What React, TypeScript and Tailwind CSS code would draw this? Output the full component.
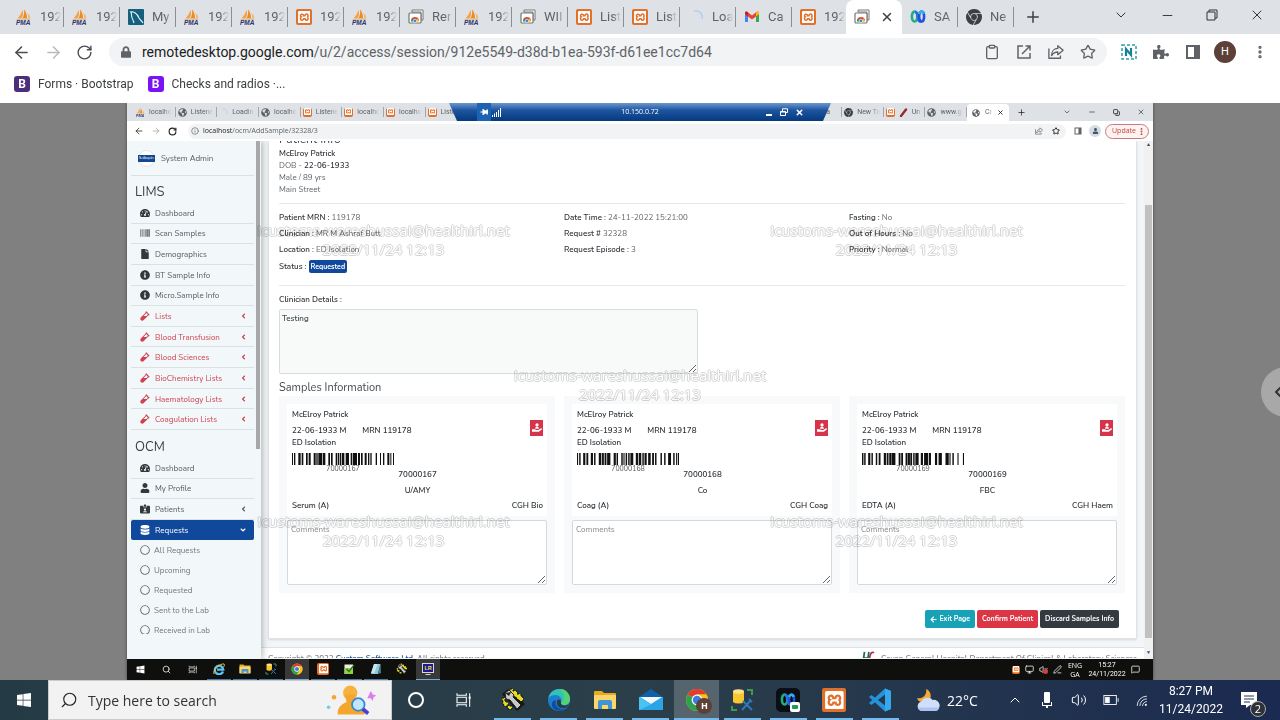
import React from "react";
import {
  FaTachometerAlt, FaBarcode, FaFile, FaInfoCircle, FaVial, FaAngleLeft, FaAngleDown, FaUser,
  FaIdCardAlt, FaDatabase, FaRegCircle, FaGlobeAmericas, FaArrowLeft, FaLock, FaWindows, FaPuzzlePiece, FaThumbtack,
} from "react-icons/fa";
import { SiXampp, SiGooglechrome } from "react-icons/si";
import {
  ArrowLeft, ArrowRight, RotateCw, X, Plus, ChevronDown, ChevronUp, ChevronLeft, Minus, Clipboard,
  Star, EllipsisVertical, Search, Volume2, Info, Copy, MessageSquare, Monitor, VolumeX, PenLine,
} from "lucide-react";

type IconProps = { className?: string };

const Pma = ({ className }: IconProps) => (
  <svg viewBox="0 0 32 32" className={className}>
    <path d="M13 2 C15 8 14 14 11 19 L3 19 C8 14 11 8 13 2Z" fill="#f4a13c" />
    <path d="M16 1 C21 6 22 14 22 19 L13 19 C16 13 17 7 16 1Z" fill="#f08a1c" />
    <path d="M23 8 C27 11 28 15 29 19 L24 19 C25 15 24 12 23 8Z" fill="#f7b35c" />
    <path d="M1 20 L30 19 L27 22 L2 22Z" fill="#d8c4a8" />
    <text x="0" y="32" fontSize="13" fontWeight="900" fontStyle="italic" fontFamily="Liberation Sans, sans-serif" fill="#2d3263">PMA</text>
  </svg>
);

const Xampp = ({ className }: IconProps) => (
  <span className={`flex items-center justify-center rounded-[2px] bg-[#e0702a] text-white ${className}`}>
    <SiXampp className="h-[78%] w-[78%]" />
  </span>
);

const MySql = ({ className }: IconProps) => (
  <svg viewBox="0 0 16 16" className={className}>
    <rect width="16" height="16" rx="1" fill="#15607f" />
    <path d="M2 3 C5 2 9 4 11 9 C12 11 14 12 15 14 M3 3 C4 6 3 8 5 11 L6 14" stroke="#e8f2f6" strokeWidth="1.1" fill="none" />
  </svg>
);

const Remote = ({ className }: IconProps) => (
  <svg viewBox="0 0 16 16" className={className}>
    <path d="M4 1 H15 V11 H13 V3 H4Z" fill="#fff" stroke="#777" strokeWidth="1" />
    <rect x="1" y="4" width="12" height="10" rx="1" fill="#fff" stroke="#777" strokeWidth="1.2" />
    <path d="M3 12 A4 4 0 0 1 11 12Z" fill="#e04a3a" />
    <path d="M3 12.6 A4 4 0 0 1 5 9 L7 13Z" fill="#35a353" />
    <path d="M11 12.6 A4 4 0 0 0 9.5 9.5 L7 13Z" fill="#f6bd22" />
    <circle cx="7" cy="12" r="1.7" fill="#3f7fe8" stroke="#fff" strokeWidth=".6" />
  </svg>
);

const Spinner = ({ className }: IconProps) => (
  <svg viewBox="0 0 16 16" className={className}>
    <path d="M6 2 A6.5 6.5 0 0 1 14 10" stroke="#b9cdf5" strokeWidth="1.6" fill="none" />
  </svg>
);

const Gmail = ({ className }: IconProps) => (
  <svg viewBox="0 0 16 16" className={className}>
    <path d="M1 4 V13 H4 V7Z" fill="#4285f4" />
    <path d="M15 4 V13 H12 V7Z" fill="#34a853" />
    <path d="M1 4 C1 2.5 2.6 2 3.6 3 L8 6.6 L12.4 3 C13.4 2 15 2.5 15 4 L12 7.4 L8 10.6 L4 7.4Z" fill="#ea4335" />
    <path d="M12 3.3 C13.6 2 15 2.6 15 4 V5 L12 7.4Z" fill="#fbbc04" />
    <path d="M1 4 C1 2.6 2.4 2 4 3.3 V7.4 L1 5Z" fill="#c5221f" />
  </svg>
);

const Webex = ({ className }: IconProps) => (
  <svg viewBox="0 0 16 16" className={className}>
    <ellipse cx="4.6" cy="7.5" rx="2.7" ry="5" fill="none" stroke="#1fae7c" strokeWidth="2.6" />
    <path d="M5 3 C7 3 8 6 8 8 C8 11 9.5 13 11 12" fill="none" stroke="#2a6df0" strokeWidth="3" />
    <ellipse cx="11.6" cy="7.5" rx="2.5" ry="5" fill="none" stroke="#2350e0" strokeWidth="2.6" />
    <path d="M9 5 C10 2 13 2 13.5 5" fill="none" stroke="#27b9dd" strokeWidth="2.4" />
  </svg>
);

const ChromeLogo = ({ className }: IconProps) => (
  <svg viewBox="0 0 24 24" className={className}>
    <circle cx="12" cy="12" r="11" fill="#fbc116" />
    <path d="M12 12 L2.5 6.5 A11 11 0 0 1 21.5 6.5 L12 6.5Z" fill="#e33b2e" />
    <path d="M12 12 L2.5 6.5 A11 11 0 0 0 12 23 L17 15Z" fill="#2da14c" />
    <path d="M12 6.5 H21.5 A11 11 0 0 1 12 23 L17 14Z" fill="#fbc116" />
    <circle cx="12" cy="12" r="5.4" fill="#fff" />
    <circle cx="12" cy="12" r="4.2" fill="#3b7de8" />
  </svg>
);

const Edge = ({ className }: IconProps) => (
  <svg viewBox="0 0 24 24" className={className}>
    <circle cx="12" cy="12" r="11" fill="#1b7fd0" />
    <path d="M1.5 10 C3 3 9 1 12 1 C19 1 23 6 23 11 C23 15 20 17 17 17 C14 17 13 15.5 14 14 C16 10 12 7 8.5 7 C5 7 2.5 8.5 1.5 10Z" fill="#35c1b5" />
    <path d="M13 1 C19 1 23 6 23 11 C23 15 20 17 17 17 C15 17 14 16 14 15 C19 12 18 5 13 1Z" fill="#5fd95a" opacity=".75" />
    <path d="M9 12 C7 17 11 22 18 21 C15 23.5 9 23.5 6 20 C3.5 16 5 12.5 9 12Z" fill="#0d4f9e" />
    <path d="M14 14 C13 17 18 19 22 16 C21 19 18.5 20.5 16 20.3 C11 20 9 16 10 13 C11 11 13.5 11 14 14Z" fill="#2a3a48" />
  </svg>
);

const Explorer = ({ className }: IconProps) => (
  <svg viewBox="0 0 24 24" className={className}>
    <path d="M1 4 Q1 3 2 3 H9 L11 5 H22 Q23 5 23 6 V20 H1Z" fill="#e8a820" />
    <rect x="1" y="7" width="22" height="14" rx="1" fill="#fcd66a" />
    <path d="M5 21 V14 Q5 12 7 12 H17 Q19 12 19 14 V21 H15 V17 H9 V21Z" fill="#3f96d6" />
  </svg>
);

const Mail = ({ className }: IconProps) => (
  <svg viewBox="0 0 24 24" className={className}>
    <path d="M0 9 L12 1 L24 9 V12 H0Z" fill="#0f5fa9" />
    <path d="M0 9 H24 V22 H0Z" fill="#2ba5e6" />
    <path d="M1 9 H23 L12 16Z" fill="#f3f7fb" />
    <path d="M0 9 L12 16.5 L0 22Z" fill="#49c3f2" />
  </svg>
);

const Tools = ({ className }: IconProps) => (
  <svg viewBox="0 0 24 24" className={className}>
    <path d="M1 6 L7 1 L24 16 L16 23Z" fill="#17170f" />
    <path d="M9 1 h3 v2 h4 v3 h4 v3 h2 v4 h-3 l-9 -8Z M1 10 h3 v4 h3 v4 h4 v3 h-4 v-3 h-4Z" fill="#e8dd1c" strokeDasharray="2" stroke="#111" />
    <path d="M4 5 L8 2 L13 7 L12 9 L20 17 L16 21 L9 12 L5 11Z" fill="#c9c9c9" stroke="#222" />
    <path d="M4 5 L8 8 L10 4" fill="#222" />
  </svg>
);

const DbTool = ({ className }: IconProps) => (
  <svg viewBox="0 0 24 24" className={className}>
    <path d="M3 3 V14 A6 2.5 0 0 0 14 14 V3Z" fill="#f8c62e" />
    <ellipse cx="8.5" cy="3.5" rx="5.5" ry="2.3" fill="#fde28a" />
    <path d="M17 2 H22 V7 M2 18 V22 H7" stroke="#3d9a4c" strokeWidth="2" fill="none" />
    <path d="M13 13 L22 22 M21 12 L12 22 M19 11 L22 14" stroke="#2a79b8" strokeWidth="2" />
  </svg>
);

const VsCode = ({ className }: IconProps) => (
  <svg viewBox="0 0 24 24" className={className}>
    <path d="M17 0.5 L23 3 V21 L17 23.5 L1 9 L3.5 7 L17 17.5 V6.5 L3.5 17 L1 15Z" fill="#2592dc" />
    <path d="M17 0.5 L23 3 V21 L17 23.5Z" fill="#35a8ee" />
  </svg>
);

const IeLogo = ({ className }: IconProps) => (
  <svg viewBox="0 0 24 24" className={className}>
    <path d="M20 17 A8.5 8.5 0 1 1 20.5 13 H8" fill="none" stroke="#5cc4f2" strokeWidth="4.5" />
    <path d="M2 22 C-2 16 14 0 22 2 C24 3 22 7 21 8" fill="none" stroke="#f5c431" strokeWidth="2" />
  </svg>
);

const TaskView = ({ className }: IconProps) => (
  <svg viewBox="0 0 24 24" className={className} fill="none" stroke="currentColor" strokeWidth="1.6">
    <path d="M3 2 V5 H17 V2 M3 22 V19 H17 V22 M3 8 H17 V16 H3Z M22 2 V22" />
    <rect x="20.5" y="7" width="3" height="3" fill="currentColor" stroke="none" />
  </svg>
);

const NotepadPlus = ({ className }: IconProps) => (
  <svg viewBox="0 0 24 24" className={className}>
    <path d="M3 3 H20 V22 H3Z" fill="#e9f2df" />
    <path d="M3 10 H20 V22 H3Z" fill="#8fcf4b" />
    <path d="M7 12 L12 17 L22 4" stroke="#356b1c" strokeWidth="2.5" fill="none" />
  </svg>
);

const Notepad = ({ className }: IconProps) => (
  <svg viewBox="0 0 24 24" className={className}>
    <path d="M8 2 H21 L16 22 H2Z" fill="#8fc9d8" />
    <path d="M8 2 H15 L9 20 H2Z" fill="#c8e6ee" />
    <path d="M16 22 L21 2 L22 20Z" fill="#4d7f8d" />
  </svg>
);

const LabRunner = ({ className }: IconProps) => (
  <svg viewBox="0 0 24 24" className={className}>
    <rect x="1" y="1" width="22" height="18" fill="#1b1b8f" stroke="#d7d7d7" strokeWidth="2" />
    <text x="5" y="14" fontSize="11" fontWeight="700" fontFamily="Liberation Sans, sans-serif" fill="#ffe23b">LR</text>
    <path d="M7 23 H17" stroke="#d7d7d7" strokeWidth="2" />
  </svg>
);

const Assistant = ({ className }: IconProps) => (
  <svg viewBox="0 0 60 36" className={className}>
    <circle cx="28" cy="10" r="8" fill="#f6b23c" />
    <path d="M14 34 C14 24 20 23 24 20 L22 12 H34 L33 20 C40 22 44 26 44 34Z" fill="#f4a52c" />
    <circle cx="37" cy="23" r="7" fill="#bfe6fb" stroke="#3d87cf" strokeWidth="2" />
    <path d="M42 28 L48 33" stroke="#4b3fd0" strokeWidth="4" />
    <circle cx="10" cy="15" r="2.5" fill="#f4a52c" />
    <circle cx="4" cy="26" r="2" fill="#6fd0df" />
    <path d="M51 8 L53 12 L57 13 L54 15 L53 19 L51 16 L47 16 L49 12Z" fill="#dd7cf0" />
  </svg>
);

const Weather = ({ className }: IconProps) => (
  <svg viewBox="0 0 28 26" className={className}>
    <path d="M12 1 C13 7 9 12 2 11 C5 18 16 17 17 9 C17 5 15 2 12 1Z" fill="#f6a93b" />
    <path d="M7 25 A6 5.5 0 0 1 7 14.5 A7 6.5 0 0 1 19 13 A6 6 0 0 1 22 25Z" fill="#cfdffa" />
    <path d="M3 21 A6 5 0 0 0 7 25 H22 A5 5 0 0 0 26 21Z" fill="#a9c3f2" />
  </svg>
);

const WifiIcon = ({ className }: IconProps) => (
  <svg viewBox="0 0 24 24" className={className} fill="none" stroke="currentColor" strokeWidth="1.5">
    <path d="M4 22 A18 18 0 0 1 22 4 M9 22 A13 13 0 0 1 22 9 M14 22 A8 8 0 0 1 22 14" />
    <circle cx="20" cy="20" r="2" fill="currentColor" stroke="none" />
  </svg>
);

const SideBySide = ({ className }: IconProps) => (
  <svg viewBox="0 0 16 16" className={className}>
    <path d="M1 1 H15 V15 H1Z M3 3 V13 H9 V3Z" fill="#5f6368" fillRule="evenodd" />
  </svg>
);

const ShareArrow = ({ className }: IconProps) => (
  <svg viewBox="0 0 18 18" className={className} fill="none" stroke="currentColor" strokeWidth="1.5" strokeLinejoin="round">
    <path d="M1 5 V16 H14 V13" />
    <path d="M11 2 L17 7 L11 12 V9 C8 9 6 10 4 13 C4 8 7 5 11 5Z" />
  </svg>
);

const OpenExternal = ({ className }: IconProps) => (
  <svg viewBox="0 0 16 16" className={className} fill="none" stroke="currentColor" strokeWidth="1.5">
    <path d="M7 2 H2 V14 H14 V9 M9.5 2 H14 V6.5 M14 2 L6 10" />
  </svg>
);

const RedMarker = () => (
  <svg viewBox="0 0 9 9" className="h-[9px] w-[9px] shrink-0">
    <path d="M2 8 L7 1.5" stroke="#8f2f28" strokeWidth="2.4" strokeLinecap="round" />
  </svg>
);

const fade = "overflow-hidden whitespace-nowrap [mask-image:linear-gradient(to_right,black_60%,transparent)]";

type TabIcon = (p: IconProps) => React.ReactNode;
const Chrome: TabIcon = ({ className }) => <SiGooglechrome className={`text-[#3c4043] ${className}`} />;
const Globe: TabIcon = ({ className }) => <FaGlobeAmericas className={`text-[#5f6368] ${className}`} />;

const outerTabs: [TabIcon, string][] = [
  [Pma, "192"], [Pma, "192"], [MySql, "My"], [Pma, "192"], [Pma, "192"], [Xampp, "192"], [Pma, "192"],
  [Remote, "Rer"], [Pma, "192"], [Remote, "WII"], [Xampp, "List"], [Xampp, "List"], [Spinner, "Loa"], [Gmail, "Ca"], [Xampp, "192"],
];

const innerTabs: [TabIcon, string][] = [
  [Pma, "localho"], [Globe, "Listene"], [Spinner, "Loadin"], [Globe, "localho"], [Xampp, "Listene"], [Xampp, "localho"],
  [Xampp, "localho"], [Xampp, "Listen"], [Xampp, ""], [Xampp, ""], [Globe, ""], [Globe, ""],
  [Globe, ""], [Globe, ""], [Globe, ""], [Chrome, ""], [Chrome, "w Ta"], [Chrome, "New Ta"], [Xampp, "Un"], [Globe, "www.g"],
];

const OuterTab = ({ icon: Icon, label }: { icon: TabIcon; label: string }) => (
  <button className="flex h-full w-[56px] items-center pl-[8px]">
    <Icon className="h-4 w-4 shrink-0" />
    <span className={`ml-[8px] w-[21px] text-left text-[13px] text-[#5f6368] ${fade}`}>{label}</span>
    <span className="ml-auto h-5 w-px bg-[#8b8f94]" />
  </button>
);

function OuterChrome() {
  return (
    <header className="shrink-0 bg-white font-['Roboto','Open_Sans',sans-serif]">
      <div className="flex h-[34px] items-center bg-[#dee1e6] pl-[8px]">
        {outerTabs.map(([icon, label], i) => <OuterTab key={i} icon={icon} label={label} />)}
        <div className="-ml-[2px] flex h-full w-[56px] items-center justify-between rounded-t-lg bg-white px-2">
          <Remote className="h-4 w-4" />
          <button aria-label="Close tab"><X className="h-[14px] w-[14px] text-[#3c4043]" strokeWidth={2.5} /></button>
        </div>
        <OuterTab icon={Webex} label="SA" />
        <OuterTab icon={Chrome} label="Ne" />
        <button aria-label="New tab" className="ml-[10px]"><Plus className="h-[18px] w-[18px] text-[#3c4043]" /></button>
        <div className="ml-auto flex items-center gap-[31px] pr-[15px] pb-1 text-[#333]">
          <button aria-label="Search tabs"><ChevronDown className="h-4 w-4" strokeWidth={1.5} /></button>
          <button aria-label="Minimize"><Minus className="h-[15px] w-[15px]" strokeWidth={1.5} /></button>
          <button aria-label="Restore">
            <svg viewBox="0 0 12 12" className="h-3 w-3" fill="none" stroke="currentColor"><path d="M3 3V1H11V9H9 M1 3H9V11H1Z" /></svg>
          </button>
          <button aria-label="Close"><X className="h-4 w-4" strokeWidth={1.5} /></button>
        </div>
      </div>
      <div className="flex h-9 items-center pr-3 pl-3 text-[#5f6368]">
        <div className="flex w-[97px] items-center gap-[13px]">
          <button aria-label="Back"><ArrowLeft className="h-[19px] w-[19px] text-[#4a4d51]" /></button>
          <button aria-label="Forward"><ArrowRight className="h-[19px] w-[19px] text-[#b9bbbe]" /></button>
          <button aria-label="Reload"><RotateCw className="h-[17px] w-[17px] text-[#4a4d51]" /></button>
        </div>
        <div className="flex h-7 flex-1 items-center rounded-full bg-[#f1f3f4] pr-[11px] pl-3">
          <FaLock className="h-3 w-[10px]" />
          <p className="ml-[11px] flex-1 text-[14px]"><span className="text-[#202124]">remotedesktop.google.com</span>/u/2/access/session/912e5549-d38d-b1ea-593f-d61ee1cc7d64</p>
          <div className="flex items-center gap-4">
            <Clipboard className="h-4 w-4" />
            <OpenExternal className="h-4 w-4" />
            <ShareArrow className="h-4 w-4" />
            <Star className="h-4 w-4" />
          </div>
        </div>
        <div className="ml-[14px] flex items-center gap-4">
          <svg viewBox="0 0 16 16" className="h-4 w-4">
            <rect x="1" y="1" width="14" height="14" fill="none" stroke="#2aa0a8" strokeWidth="1.5" strokeDasharray="3 2" />
            <path d="M5 12 V5 L10 11 V4" fill="none" stroke="#1b7f9a" strokeWidth="2.2" />
          </svg>
          <FaPuzzlePiece className="h-4 w-4" />
          <SideBySide className="h-4 w-4" />
          <span className="-ml-[3px] flex h-[22px] w-[22px] items-center justify-center rounded-full bg-[#5d4037] text-[11px] text-white">H</span>
          <button aria-label="Menu"><EllipsisVertical className="h-4 w-4" strokeWidth={3} /></button>
        </div>
      </div>
      <nav className="flex h-[33px] items-center gap-[14px] pb-[5px] pl-[14px] text-[12px] text-[#3c4043]">
        <a href="#forms" className="flex items-center gap-2">
          <span className="flex h-4 w-4 items-center justify-center rounded-[3px] bg-[#4b2f7c] text-[12px] font-bold text-white">B</span>Forms · Bootstrap
        </a>
        <a href="#checks" className="flex items-center gap-2">
          <span className="flex h-4 w-4 items-center justify-center rounded-[3px] bg-[#7a12f5] text-[12px] font-bold text-white">B</span>Checks and radios ·...
        </a>
      </nav>
    </header>
  );
}

function InnerChrome() {
  return (
    <div className="relative shrink-0 bg-white">
      <div className="flex h-[18px] items-center bg-[#dee1e6] pl-[7px] font-['Roboto','Open_Sans',sans-serif] text-[7px] text-[#5f6368]">
        <div className="flex h-full w-[833px] items-center">
          {innerTabs.map(([Icon, label], i) => (
            <button key={i} className="flex h-[10px] min-w-0 flex-1 items-center gap-[4px] border-r border-[#a3a6aa] pr-[3px] pl-[2px]">
              <Icon className="h-[9px] w-[9px] shrink-0" />
              {label === "Un" && <RedMarker />}
              <span className={`flex-1 text-left ${fade}`}>{label}</span>
            </button>
          ))}
        </div>
        <div className="flex h-[17px] w-[42px] items-center gap-[5px] self-end rounded-t bg-white px-[5px]">
          <Globe className="h-[8px] w-[8px] shrink-0" />
          <span className={`w-[11px] ${fade}`}>Ca</span>
          <X className="h-[7px] w-[7px] shrink-0 text-[#222]" strokeWidth={3} />
        </div>
        <Plus className="ml-[8px] h-[9px] w-[9px] text-[#222]" />
        <div className="ml-auto flex items-center gap-[17px] pr-[8px] text-[#333]">
          <ChevronDown className="h-2 w-2" />
          <Minus className="h-2 w-2" />
          <Copy className="h-[7px] w-[7px] rotate-180" strokeWidth={3} />
          <X className="h-2 w-2" />
        </div>
      </div>
      <div className="flex h-5 items-center px-[7px] text-[7px] text-[#5f6368]">
        <div className="flex w-[54px] items-center gap-[7px]">
          <ArrowLeft className="h-[10px] w-[10px] text-[#333]" />
          <ArrowRight className="h-[10px] w-[10px] text-[#aaa]" />
          <RotateCw className="h-[9px] w-[9px] text-[#222]" strokeWidth={3} />
        </div>
        <div className="flex h-[15px] flex-1 items-center rounded-full bg-[#f1f3f4] px-[3px]">
          <Info className="h-[8px] w-[8px]" />
          <p className="ml-[4px] flex-1"><span className="text-[#202124]">localhost</span>/ocm/AddSample/32328/3</p>
          <ShareArrow className="h-[8px] w-[8px]" />
          <Star className="mr-[3px] ml-[9px] h-[8px] w-[8px] text-[#222]" strokeWidth={3} />
        </div>
        <SideBySide className="ml-[8px] h-[8px] w-[8px]" />
        <span className="mr-[4px] ml-[7px] flex h-[12px] w-[12px] items-center justify-center rounded-full bg-[#d5dce3]"><FaUser className="h-[6px] w-[7px] text-[#41566b]" /></span>
        <button className="-mr-[3px] flex h-[15px] w-[44px] items-center justify-between rounded-full border border-[#c77b78] bg-[#fdf3f2] px-[6px] text-[#c5443c]">
          Update<EllipsisVertical className="-mr-1 h-[9px] w-[9px]" strokeWidth={3} />
        </button>
      </div>
      <div className="absolute top-0 left-1/2 flex h-[18px] w-[382px] -translate-x-1/2 items-center bg-linear-to-b from-[#6a97cd] via-[#1d55a0] via-40% to-[#053a80] text-white [clip-path:polygon(0_0,100%_0,calc(100%-8px)_100%,8px_100%)]">
        <span className="ml-[28px] flex h-full w-[14px] items-center justify-center bg-[#1c63b4]"><FaThumbtack className="h-[8px] w-[8px] rotate-90" /></span>
        <svg viewBox="0 0 9 9" className="ml-[1px] h-[9px] w-[9px]" fill="#fff"><path d="M0 7h1v2H0z M2 5.5h1V9H2z M4 4h1v5H4z M6 2h1v7H6z M8 0h1v9H8z" /></svg>
        <span className="flex-1 pl-[14px] text-center text-[7px]">10.150.0.72</span>
        <div className="flex w-[66px] items-center gap-[7px]">
          <svg viewBox="0 0 8 8" className="h-[8px] w-[8px]"><path d="M1 6h6v2H1z" fill="#fff" /></svg>
          <svg viewBox="0 0 8 8" className="h-[8px] w-[8px]" fill="none" stroke="#fff"><path d="M2.5 3V.8H7.5V4.5H5.5 M.5 3.5H5.5V7.5H.5Z M.5 4H5.5" /></svg>
          <X className="h-[9px] w-[9px]" strokeWidth={4} />
        </div>
      </div>
    </div>
  );
}

type Row = [React.ElementType, string, ("red" | "dark")?, boolean?];
const limsRows: Row[] = [
  [FaTachometerAlt, "Dashboard"], [FaBarcode, "Scan Samples"], [FaFile, "Demographics"], [FaInfoCircle, "BT Sample Info"], [FaInfoCircle, "Micro.Sample Info"],
  [FaVial, "Lists", "red", true], [FaVial, "Blood Transfusion", "red", true], [FaVial, "Blood Sciences", "red", true],
  [FaVial, "BioChemistry Lists", "red", true], [FaVial, "Haematology Lists", "red", true], [FaVial, "Coagulation Lists", "red", true],
];
const ocmRows: Row[] = [[FaTachometerAlt, "Dashboard"], [FaUser, "My Profile"], [FaIdCardAlt, "Patients", "dark", true]];

const SideRow = ({ row: [Icon, label, tone, arrow] }: { row: Row }) => (
  <a href="#section" className={`flex items-center border-b border-[#dbe1e3] pr-[8px] pl-[9px] ${tone === "red" ? "text-[#cf4351]" : "text-[#555c61]"}`}>
    <Icon className={`h-[10px] w-[10px] ${tone === "red" ? "" : "text-[#32383d]"}`} />
    <span className="ml-[5px] flex-1 pt-[2px]">{label}</span>
    {arrow && <FaAngleLeft className="h-[8px] w-[5px]" />}
  </a>
);

function Sidebar() {
  return (
    <aside className="relative z-10 flex w-[134px] shrink-0 bg-[#f2f7f9] text-[8px] shadow-[2px_0_6px_rgba(0,0,0,0.25)]">
      <div className="flex flex-1 flex-col overflow-hidden pr-[2px] pl-[4px]">
        <div className="flex h-[35px] items-center border-b border-[#dbe1e3] pl-[7px] text-[#555c61]">
          <span className="flex h-[17px] w-[17px] items-center rounded-full border border-[#dde6ee] bg-white">
            <span className="-mx-px w-[17px] shrink-0 bg-[#12488f] text-center text-[3px] leading-[7px] text-white">NetAcquire</span>
          </span>
          <span className="ml-[6px] pt-[2px]">System Admin</span>
        </div>
        <h2 className="h-[27px] pt-[8px] pl-[4px] text-[13px] leading-4 text-[#3d4449]">LIMS</h2>
        <nav className="grid h-[227px] auto-rows-fr">{limsRows.map((r, i) => <SideRow key={i} row={r} />)}</nav>
        <h2 className="h-[28px] pt-[9px] pl-[4px] text-[13px] leading-4 text-[#3d4449]">OCM</h2>
        <nav className="grid h-[62px] auto-rows-fr">{ocmRows.map((r, i) => <SideRow key={i} row={r} />)}</nav>
        <a href="#requests" className="flex h-[20px] items-center rounded-[2px] bg-[#10489c] pr-[8px] pl-[9px] text-white">
          <FaDatabase className="h-[10px] w-[10px]" />
          <span className="ml-[5px] flex-1 pt-[2px]">Requests</span>
          <FaAngleDown className="h-[8px] w-[6px]" />
        </a>
        <nav className="h-[94px] overflow-hidden text-[#71777c]">
          {["All Requests", "Upcoming", "Requested", "Sent to the Lab", "Received in Lab"].map((t) => (
            <a href="#status" key={t} className="flex h-5 items-center pl-[9px]"><FaRegCircle className="h-[10px] w-[10px]" /><span className="ml-[4px] pt-[2px]">{t}</span></a>
          ))}
        </nav>
      </div>
      <div className="w-[5px]"><div className="h-[308px] w-[4px] bg-[#a6a8a9]" /></div>
    </aside>
  );
}

type Sample = { id: string; test: string; tube: string; dept: string; bars: number[][]; origin: number; span: number };
const samples: Sample[] = [
  { id: "70000167", test: "U/AMY", tube: "Serum (A)", dept: "CGH Bio", origin: 67, span: 306,
    bars: [[67,69],[73,76],[86,92],[96,100],[109,113],[117,122],[132,137],[140,143],[146,157],[160,166],[176,180],[184,188],[198,201],[204,207],[210,213],[216,223],[228,237],[243,247],[250,261],[265,270],[274,278],[285,290],[295,298],[302,305],[318,321],[331,333],[340,343],[353,358],[362,364],[370,372]] },
  { id: "70000168", test: "Co", tube: "Coag (A)", dept: "CGH Coag", origin: 46, span: 281,
    bars: [[46,48],[52,55],[63,68],[72,76],[84,89],[93,96],[106,112],[115,119],[122,126],[129,137],[147,152],[155,158],[168,171],[174,176],[180,183],[187,190],[193,200],[208,213],[216,222],[226,229],[232,237],[242,248],[253,257],[261,264],[276,279],[286,289],[297,304],[311,314],[319,321],[324,327]] },
  { id: "70000169", test: "FBC", tube: "EDTA (A)", dept: "CGH Haem", origin: 829, span: 281,
    bars: [[829,832],[835,838],[846,851],[855,858],[867,870],[875,879],[889,894],[897,901],[904,908],[910,920],[930,934],[937,941],[949,953],[955,960],[962,966],[970,973],[976,984],[991,996],[1000,1010],[1013,1018],[1030,1035],[1040,1048],[1059,1067],[1070,1072],[1078,1081],[1092,1094],[1107,1110]] },
];

const SampleCard = ({ s }: { s: Sample }) => (
  <article className="bg-[#f8f9fa] p-[8px]">
    <div className="bg-white pt-[5px] pr-[4px] pb-[4px] pl-[5px] font-semibold leading-[12px] text-[#2d3338]">
      <div className="flex justify-between">
        <div>
          <p>McElroy Patrick</p>
          <p className="mt-[4px] flex gap-[16px]"><span>22-06-1933 M</span><span>MRN 119178</span></p>
          <p>ED Isolation</p>
        </div>
        <button aria-label="Collect sample" className="mt-[11px] flex h-4 w-[13px] items-center justify-center bg-[#d5344a]">
          <svg viewBox="0 0 16 16" className="h-[10px] w-[10px]" fill="#fff">
            <circle cx="8" cy="3" r="2.6" /><path d="M5 9 C5 5 11 5 11 9Z" /><path d="M0 10 H4 L7 11 H10 L15 8 L16 10 L11 14 H0Z" />
          </svg>
        </button>
      </div>
      <div className="mt-[4px] w-[102px]">
        <svg viewBox={`0 0 ${s.span} 10`} preserveAspectRatio="none" className="h-[12px] w-full">
          {s.bars.map(([a, b]) => <rect key={a} x={a - s.origin} y="0" width={b - a + 1} height="10" fill="#111" />)}
        </svg>
        <p className="text-center text-[7px] leading-[8px] font-normal text-[#555]">{s.id}</p>
      </div>
      <p className="-mt-[4px] text-center">{s.id}</p>
      <p className="mt-[4px] text-center">{s.test}</p>
      <p className="mt-[3px] flex justify-between"><span>{s.tube}</span><span>{s.dept}</span></p>
    </div>
    <textarea aria-label={`Comments for ${s.id}`} placeholder="Comments" className="mt-[4px] block h-[65px] w-full rounded-[2px] border border-[#d3d9dd] bg-white px-[3px] py-[3px] leading-[12px] placeholder:text-[#858b90]" />
  </article>
);

const Field = ({ label, value }: { label: string; value: string }) => (
  <p><span className="font-semibold text-[#30363b]">{label}</span> {value}</p>
);

function Main() {
  return (
    <main className="flex min-w-0 flex-1 flex-col bg-[#f3f6f8] text-[8px] text-[#60666b]">
      <section className="mr-[7px] ml-[7px] rounded-b-[2px] border border-t-0 border-[#dfe3e5] bg-white pr-[11px] pb-[10px] pl-[10px] shadow-sm">
        <div className="flex h-[7px] items-end overflow-hidden"><h1 className="mb-[1px] text-[12px] leading-[16px] text-[#3a4045]">Patient Info</h1></div>
        <div className="leading-[12px]">
          <p className="font-semibold text-[#30363b]">McElroy Patrick</p>
          <p>DOB - <span className="font-semibold text-[#30363b]">22-06-1933</span></p>
          <p>Male / 89 yrs</p>
          <p>Main Street</p>
        </div>
        <div className="mt-[7px] grid grid-cols-3 gap-[9px] border-y border-[#e6e8ea] pt-[6px] pb-[10px] leading-[16px]">
          <div>
            <Field label="Patient MRN :" value="119178" />
            <Field label="Clinician :" value="MR M Ashraf Butt" />
            <Field label="Location :" value="ED Isolation" />
            <p className="flex h-[17px] items-center gap-[2px] font-semibold text-[#30363b]">Status :<span className="rounded-[2px] bg-[#10489c] px-[2px] text-[7px] leading-[13px] font-bold text-white">Requested</span></p>
          </div>
          <div>
            <Field label="Date Time :" value="24-11-2022 15:21:00" />
            <Field label="Request #" value="32328" />
            <Field label="Request Episode :" value="3" />
          </div>
          <div>
            <Field label="Fasting :" value="No" />
            <Field label="Out of Hours :" value="No" />
            <Field label="Priority :" value="Normal" />
          </div>
        </div>
        <label htmlFor="details" className="mt-[8px] block leading-[12px] font-semibold text-[#30363b]">Clinician Details :</label>
        <textarea id="details" defaultValue="Testing" className="mt-[3px] block h-[65px] w-[calc(50%-4px)] rounded-[2px] border border-[#d8dcdf] bg-[#f8fafa] px-[2px] py-[3px] leading-[12px] font-semibold text-[#444b50]" />
        <h2 className="mt-[6px] text-[11px] leading-[16px] text-[#454b50]">Samples Information</h2>
        <div className="grid grid-cols-3 gap-[9px]">{samples.map((s) => <SampleCard key={s.id} s={s} />)}</div>
        <div className="mt-[17px] flex justify-end gap-[2px] pr-[6px] text-[7px] font-bold text-white">
          <button className="flex h-[18px] items-center gap-[2px] rounded-[2px] bg-[#17a2b8] px-[5px]"><FaArrowLeft className="h-[7px] w-[7px]" />Exit Page</button>
          <button className="h-[18px] rounded-[2px] bg-[#dc3545] px-[5px]">Confirm Patient</button>
          <button className="h-[18px] rounded-[2px] bg-[#343a40] px-[5px]">Discard Samples Info</button>
        </div>
      </section>
      <footer className="mt-[8px] flex h-[11px] items-start justify-between overflow-hidden border-t border-[#dee2e6] bg-white px-[7px] pt-[5px] leading-[12px] font-semibold text-[#7b8186]">
        <p>Copyright © 2022 <span className="text-[#12488f]">Custom Software Ltd.</span> All rights reserved.</p>
        <p className="flex items-start gap-[6px]">
          <svg viewBox="0 0 16 16" className="-mt-[2px] h-[14px] w-[14px]" fill="none" strokeWidth="2"><path d="M4 1 L2 15 M9 1 L7 15 M3 8 H8" stroke="#1d6b55" /><path d="M15 2 C11 0 10 5 9 14" stroke="#b1305b" /></svg>
          Cavan General Hospital Department Of Clinical &amp; Laboratory Sciences
        </p>
      </footer>
    </main>
  );
}

const Watermark = ({ place }: { place: string }) => (
  <div className={`absolute -translate-x-1/2 text-center font-['Open_Sans',sans-serif] text-[15px] leading-[19px] whitespace-nowrap text-white [text-shadow:1px_0_#d6d6d6,-1px_0_#d6d6d6,0_1px_#d6d6d6,0_-1px_#d6d6d6] ${place}`}>
    <p>!customs-wareshussai@healthirl.net</p>
    <p>2022/11/24 12:13</p>
  </div>
);

function InnerTaskbar() {
  const items: [React.ElementType, string][] = [
    [FaWindows, ""], [Search, ""], [TaskView, ""], [IeLogo, "run"], [Explorer, "run"], [DbTool, "run"],
    [ChromeLogo, "active"], [Xampp, "run"], [NotepadPlus, "run"], [Notepad, "run"], [Tools, ""], [LabRunner, "active"],
  ];
  return (
    <div className="flex h-[21px] shrink-0 items-center bg-[#0f0f0d] text-[7px] text-white">
      <div className="flex h-full w-[314px]">
        {items.map(([Icon, mode], i) => (
          <button key={i} aria-label={`Remote app ${i + 1}`} className={`mx-px flex flex-1 items-center justify-center border-b ${mode === "active" ? "border-[#76a9d8] bg-[#393939]" : mode === "run" ? "border-[#4d7ca6]" : "border-transparent"}`}>
            <Icon className={i < 3 ? "h-[9px] w-[9px]" : "h-[12px] w-[12px]"} />
          </button>
        ))}
      </div>
      <div className="ml-auto flex items-center gap-[5px] pr-[13px]">
        <Xampp className="h-[8px] w-[8px]" />
        <Monitor className="h-[9px] w-[9px]" />
        <span className="relative"><VolumeX className="h-[9px] w-[9px]" /><span className="absolute right-0 bottom-0 h-[5px] w-[5px] rounded-full bg-[#d93a3a]" /></span>
        <PenLine className="h-[9px] w-[9px]" />
        <p className="w-4 text-center leading-[9px]">ENG<br />GA</p>
        <p className="w-[38px] text-center font-['Roboto',sans-serif] leading-[9px] whitespace-nowrap">15:27<br />24/11/2022</p>
        <MessageSquare className="h-[9px] w-[9px]" />
      </div>
    </div>
  );
}

function Taskbar() {
  const apps: [React.ElementType, string][] = [
    [Tools, ""], [Edge, ""], [Explorer, ""], [Mail, ""], [ChromeLogo, "H"], [DbTool, ""], [Webex, "W"], [Xampp, ""], [VsCode, ""],
  ];
  return (
    <footer className="flex h-10 shrink-0 items-center bg-linear-to-r from-[#243a44] via-[#2b3f4a] to-[#1b2a50] text-white">
      <button aria-label="Start" className="flex w-12 justify-center"><FaWindows className="h-4 w-4" /></button>
      <label className="flex h-full w-[344px] items-center border border-[#c9cbcc] bg-[#f2f2f2] pl-[11px]">
        <Search className="h-[18px] w-[18px] -scale-x-100 text-[#222]" strokeWidth={1.5} />
        <input aria-label="Search" placeholder="Type here to search" className="ml-[10px] min-w-0 flex-1 bg-transparent text-[14px] placeholder:text-[#333]" />
        <Assistant className="mr-3 h-[34px] w-[54px]" />
      </label>
      <button aria-label="Cortana" className="flex w-12 justify-center"><span className="h-4 w-4 rounded-full border-2 border-white" /></button>
      <button aria-label="Task view" className="flex w-[46px] justify-center"><TaskView className="h-4 w-4" /></button>
      <div className="ml-1 flex h-full w-[413px]">
        {apps.map(([Icon, badge], i) => (
          <button key={i} aria-label={`App ${i + 1}`} className={`relative flex flex-1 items-center justify-center ${badge === "H" ? "bg-[#56646e]" : ""}`}>
            {badge === "W"
              ? <span className="relative flex h-6 w-6 items-center justify-center rounded-[5px] bg-[#0b0f14]"><Webex className="h-4 w-[18px]" /><span className="absolute right-0 bottom-0 flex h-[10px] w-[10px] items-center justify-center rounded-[2px] bg-white"><span className="h-1 w-[6px] rounded-[1px] bg-[#1d9a62]" /></span></span>
              : <Icon className="h-6 w-6" />}
            {badge === "H" && <span className="absolute right-[7px] bottom-[6px] flex h-4 w-4 items-center justify-center rounded-full bg-[#5d4037] text-[9px] font-bold">H</span>}
            <span className={`absolute bottom-0 h-[2px] bg-[#76b9ed] ${badge === "H" ? "w-full" : "w-[37px]"}`} />
          </button>
        ))}
      </div>
      <div className="ml-3 flex items-center gap-[6px] text-[14px]"><Weather className="h-6 w-[26px]" />22°C</div>
      <div className="ml-auto flex items-center gap-[16px]">
        <ChevronUp className="h-4 w-4" strokeWidth={1.5} />
        <svg viewBox="0 0 16 16" className="h-4 w-4" fill="#fff"><rect x="5" y="0" width="6" height="11" rx="1" /><path d="M3 10 H4 V13 H12 V10 H13 V14 H9 V16 H7 V14 H3Z" /></svg>
        <Volume2 className="h-4 w-4" strokeWidth={1.5} />
        <svg viewBox="0 0 18 16" className="h-4 w-4" fill="none" stroke="#fff"><rect x="1" y="3" width="14" height="10" /><rect x="3" y="5" width="4" height="6" fill="#fff" /><path d="M17 6V10" /></svg>
        <WifiIcon className="h-[13px] w-[13px]" />
      </div>
      <p className="ml-2 w-[70px] text-center font-['Roboto',sans-serif] text-[12px] leading-[18px]">8:27 PM<br />11/24/2022</p>
      <div className="relative mr-[22px] ml-[14px]">
        <svg viewBox="0 0 18 18" className="h-[18px] w-[18px]"><path d="M1 1 H17 V14 H10 L6 17 V14 H1Z" fill="#fff" /><path d="M4 5H14 M4 8H14 M4 11H10" stroke="#25344f" /></svg>
        <span className="absolute -right-2 -bottom-2 flex h-4 w-4 items-center justify-center rounded-full border border-[#aaa] bg-[#2e3238] text-[11px]">2</span>
      </div>
    </footer>
  );
}

export default function App() {
  return (
    <div className="flex h-screen flex-col overflow-hidden font-['Open_Sans','Noto_Sans',sans-serif]">
      <OuterChrome />
      <div className="relative flex min-h-0 flex-1 justify-center overflow-hidden bg-[#808080] px-[127px]">
        <div className="relative flex min-w-0 flex-1 flex-col shadow-[0_0_3px_#444]">
          <InnerChrome />
          <div className="flex min-h-0 flex-1 overflow-hidden font-['Nunito','Lato','Open_Sans',sans-serif]">
            <Sidebar />
            <Main />
            <div className="flex w-[9px] flex-col items-center bg-[#f1f1f1] text-[5px] leading-[8px] text-[#444]">
              <span className="h-[64px]">▲</span>
              <span className="w-[7px] flex-1 bg-[#c1c1c1]" />
              <span className="h-[21px] pt-[11px]">▼</span>
            </div>
          </div>
          <InnerTaskbar />
          <div className="pointer-events-none absolute inset-0 z-20 overflow-hidden mix-blend-multiply">
            <Watermark place="top-[118px] left-1/4" />
            <Watermark place="top-[118px] left-3/4" />
            <Watermark place="top-[263px] left-1/2" />
            <Watermark place="top-[409px] left-1/4" />
            <Watermark place="top-[409px] left-3/4" />
          </div>
        </div>
        <button aria-label="Session options" className="absolute top-[264px] -right-[31px] flex h-[50px] w-[50px] items-center rounded-full bg-[#a8a8a8] pl-[9px] text-[#333]"><ChevronLeft className="h-4 w-4" strokeWidth={3} /></button>
      </div>
      <Taskbar />
    </div>
  );
}
